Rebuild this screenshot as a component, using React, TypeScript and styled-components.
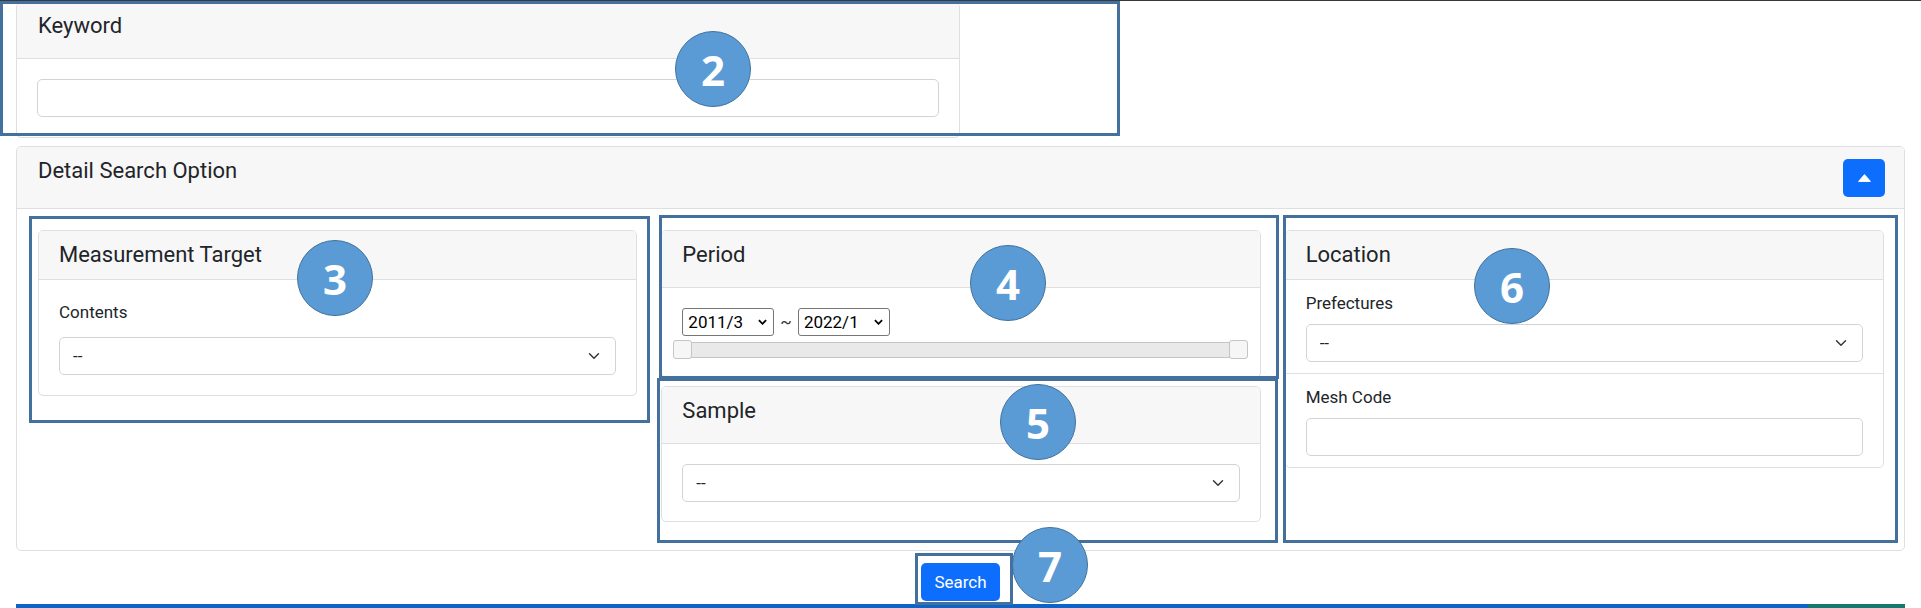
import React from "react";
import styled, { createGlobalStyle } from "styled-components";

const GlobalStyle = createGlobalStyle`
  body {
    margin: 0;
    font-family: Roboto, "Liberation Sans", sans-serif;
    color: #212529;
    background: #fff;
  }
  * {
    box-sizing: border-box;
  }
`;

const chevron =
  "url(\"data:image/svg+xml,%3csvg xmlns='http://www.w3.org/2000/svg' viewBox='0 0 16 16'%3e%3cpath fill='none' stroke='%23343a40' stroke-linecap='round' stroke-linejoin='round' stroke-width='2' d='m2 5 6 6 6-6'/%3e%3c/svg%3e\")";

const boldChevron =
  "url(\"data:image/svg+xml,%3csvg xmlns='http://www.w3.org/2000/svg' viewBox='0 0 10 6'%3e%3cpath fill='none' stroke='%23000' stroke-width='2' d='M1 1l4 4 4-4'/%3e%3c/svg%3e\")";

const Page = styled.div`
  position: relative;
  width: 1921px;
  height: 608px;
  overflow: hidden;
  border-top: 1px solid #343a40;
`;

const Container = styled.div`
  padding: 0 16px;
`;

const Card = styled.div<{ $width?: string }>`
  width: ${(p) => p.$width || "auto"};
  border: 1px solid #dfdfdf;
  border-radius: 5px;
  background: #fff;
  overflow: hidden;
`;

const KeywordCard = styled(Card)`
  margin-top: 1px;
`;

const DetailCard = styled(Card)`
  margin-top: 8px;
`;

const CardHeader = styled.div<{ $pad: string }>`
  background: #f7f7f7;
  border-bottom: 1px solid #dfdfdf;
  padding: ${(p) => p.$pad};
  font-size: 22px;
  line-height: 33px;
  display: flex;
  justify-content: space-between;
  align-items: flex-start;
`;

const HeaderTitle = styled.div<{ $shift?: number }>`
  margin-top: ${(p) => p.$shift || 0}px;
`;

const CardBody = styled.div<{ $pad: string }>`
  padding: ${(p) => p.$pad};
`;

const TextInput = styled.input`
  display: block;
  width: 100%;
  height: 38px;
  border: 1px solid #ced4da;
  border-radius: 5px;
  padding: 0 13px;
  font: inherit;
  font-size: 17px;
  outline: none;
`;

const Select = styled.select`
  display: block;
  width: 100%;
  height: 38px;
  appearance: none;
  border: 1px solid #ced4da;
  border-radius: 5px;
  padding: 0 40px 0 13px;
  font-family: inherit;
  font-size: 17px;
  color: #212529;
  background: #fff ${chevron} no-repeat right 13px center / 16px 12px;
  outline: none;
`;

const ToggleButton = styled.button`
  width: 42px;
  height: 38px;
  border: none;
  border-radius: 5px;
  background: #0d6efd;
  display: flex;
  align-items: center;
  justify-content: center;
  padding: 0;
`;

const OptionGrid = styled.div`
  display: grid;
  grid-template-columns: repeat(3, 1fr);
  gap: 24px;
  align-items: start;
`;

const Column = styled.div`
  display: flex;
  flex-direction: column;
  gap: 8px;
`;

const Label = styled.div<{ $gap: number }>`
  font-size: 17px;
  line-height: 25px;
  margin-bottom: ${(p) => p.$gap}px;
`;

const ListItem = styled.div<{ $last?: boolean }>`
  padding: 11px 20px;
  border-bottom: ${(p) => (p.$last ? "none" : "1px solid #dfdfdf")};
`;

const PeriodRow = styled.div`
  display: flex;
  align-items: center;
  gap: 6px;
  padding-left: 20px;
  font-size: 17px;
`;

const MonthSelect = styled.select`
  width: 92px;
  height: 28px;
  appearance: none;
  border: 1px solid #767676;
  border-radius: 3px;
  padding: 0 0 0 5px;
  font-family: inherit;
  font-size: 17px;
  color: #000;
  background: #fff ${boldChevron} no-repeat right 6px center / 9px 6px;
  outline: none;
`;

const Tilde = styled.span`
  color: #333;
  font-size: 17px;
`;

const SliderTrack = styled.div`
  position: relative;
  margin: 4px 12px 0 12px;
  height: 19px;
  display: flex;
  align-items: center;

  &::before {
    content: "";
    flex: 1;
    height: 14px;
    background: #e9e9e9;
    border: 1px solid #c5c5c5;
    border-radius: 3px;
  }
`;

const Handle = styled.span<{ $side: "left" | "right" }>`
  position: absolute;
  top: 0;
  ${(p) => (p.$side === "left" ? "left: -1px;" : "right: 0;")}
  width: 19px;
  height: 19px;
  background: #f6f6f6;
  border: 1px solid #c5c5c5;
  border-radius: 3px;
`;

const Actions = styled.div`
  display: flex;
  justify-content: center;
  margin-top: 12px;
`;

const SearchButton = styled.button`
  height: 38px;
  padding: 0 13px;
  border: none;
  border-radius: 5px;
  background: #0d6efd;
  color: #fff;
  font-family: inherit;
  font-size: 17px;
`;

const Footer = styled.div`
  display: flex;
  margin-top: 3px;
  height: 10px;
`;

const FooterBlue = styled.div`
  flex: 1;
  background: #0d64c8;
`;

const FooterTeal = styled.div`
  width: 97px;
  background: #17786f;
`;

/* annotation overlay */
const Overlay = styled.div`
  position: absolute;
  inset: 0;
  pointer-events: none;
`;

const Frame = styled.div<{ $x: number; $y: number; $w: number; $h: number }>`
  position: absolute;
  left: ${(p) => p.$x}px;
  top: ${(p) => p.$y}px;
  width: ${(p) => p.$w}px;
  height: ${(p) => p.$h}px;
  border: 3px solid #44709d;
`;

const Badge = styled.div<{ $cx: number; $cy: number }>`
  position: absolute;
  left: ${(p) => p.$cx - 38}px;
  top: ${(p) => p.$cy - 38}px;
  width: 76px;
  height: 76px;
  border-radius: 50%;
  background: #5b9bd5;
  border: 1px solid #41719c;
  color: #fff;
  font-family: "Open Sans", sans-serif;
  font-weight: 700;
  font-size: 42px;
  display: flex;
  align-items: center;
  justify-content: center;
`;

const frames = [
  { x: 0, y: 0, w: 1120, h: 135 },
  { x: 29, y: 215, w: 621, h: 207 },
  { x: 659, y: 214, w: 620, h: 164 },
  { x: 657, y: 377, w: 621, h: 165 },
  { x: 1283, y: 214, w: 615, h: 328 },
  { x: 915, y: 552, w: 98, h: 52 },
];

const badges = [
  { n: 2, cx: 713, cy: 68 },
  { n: 3, cx: 335, cy: 277 },
  { n: 4, cx: 1008, cy: 282 },
  { n: 5, cx: 1038, cy: 421 },
  { n: 6, cx: 1512, cy: 285 },
  { n: 7, cx: 1050, cy: 564 },
];

const App: React.FC = () => {
  return (
    <Page>
      <GlobalStyle />
      <Container>
        <KeywordCard $width="944px">
          <CardHeader $pad="6px 21px 16px">
            <HeaderTitle>Keyword</HeaderTitle>
          </CardHeader>
          <CardBody $pad="20px 20px">
            <TextInput type="text" />
          </CardBody>
        </KeywordCard>

        <DetailCard>
          <CardHeader $pad="12px 19px 11px 21px">
            <HeaderTitle $shift={-5}>Detail Search Option</HeaderTitle>
            <ToggleButton>
              <svg width="13" height="8" viewBox="0 0 13 8">
                <path d="M6.5 0.6 L12.4 7.4 H0.6 Z" fill="#fff" stroke="#fff" strokeWidth="1" strokeLinejoin="round" />
              </svg>
            </ToggleButton>
          </CardHeader>
          <CardBody $pad="21px 20px 28px 21px">
            <OptionGrid>
              <Card>
                <CardHeader $pad="7px 20px 8px">
                  <HeaderTitle>Measurement Target</HeaderTitle>
                </CardHeader>
                <CardBody $pad="20px 20px">
                  <Label $gap={12}>Contents</Label>
                  <Select defaultValue="">
                    <option value="">--</option>
                  </Select>
                </CardBody>
              </Card>

              <Column>
                <Card>
                  <CardHeader $pad="7px 20px 16px">
                    <HeaderTitle>Period</HeaderTitle>
                  </CardHeader>
                  <CardBody $pad="20px 0 18px">
                    <PeriodRow>
                      <MonthSelect defaultValue="2011/3">
                        <option>2011/3</option>
                      </MonthSelect>
                      <Tilde>~</Tilde>
                      <MonthSelect defaultValue="2022/1">
                        <option>2022/1</option>
                      </MonthSelect>
                    </PeriodRow>
                    <SliderTrack>
                      <Handle $side="left" />
                      <Handle $side="right" />
                    </SliderTrack>
                  </CardBody>
                </Card>
                <Card>
                  <CardHeader $pad="7px 20px 16px">
                    <HeaderTitle>Sample</HeaderTitle>
                  </CardHeader>
                  <CardBody $pad="20px 20px 19px">
                    <Select defaultValue="">
                      <option value="">--</option>
                    </Select>
                  </CardBody>
                </Card>
              </Column>

              <Card>
                <CardHeader $pad="7px 20px 8px">
                  <HeaderTitle>Location</HeaderTitle>
                </CardHeader>
                <ListItem>
                  <Label $gap={8}>Prefectures</Label>
                  <Select defaultValue="">
                    <option value="">--</option>
                  </Select>
                </ListItem>
                <ListItem $last>
                  <Label $gap={8}>Mesh Code</Label>
                  <TextInput type="text" />
                </ListItem>
              </Card>
            </OptionGrid>
          </CardBody>
        </DetailCard>

        <Actions>
          <SearchButton>Search</SearchButton>
        </Actions>

        <Footer>
          <FooterBlue />
          <FooterTeal />
        </Footer>
      </Container>

      <Overlay>
        {frames.map((f, i) => (
          <Frame key={i} $x={f.x} $y={f.y} $w={f.w} $h={f.h} />
        ))}
        {badges.map((b) => (
          <Badge key={b.n} $cx={b.cx} $cy={b.cy}>
            {b.n}
          </Badge>
        ))}
      </Overlay>
    </Page>
  );
};

export default App;
